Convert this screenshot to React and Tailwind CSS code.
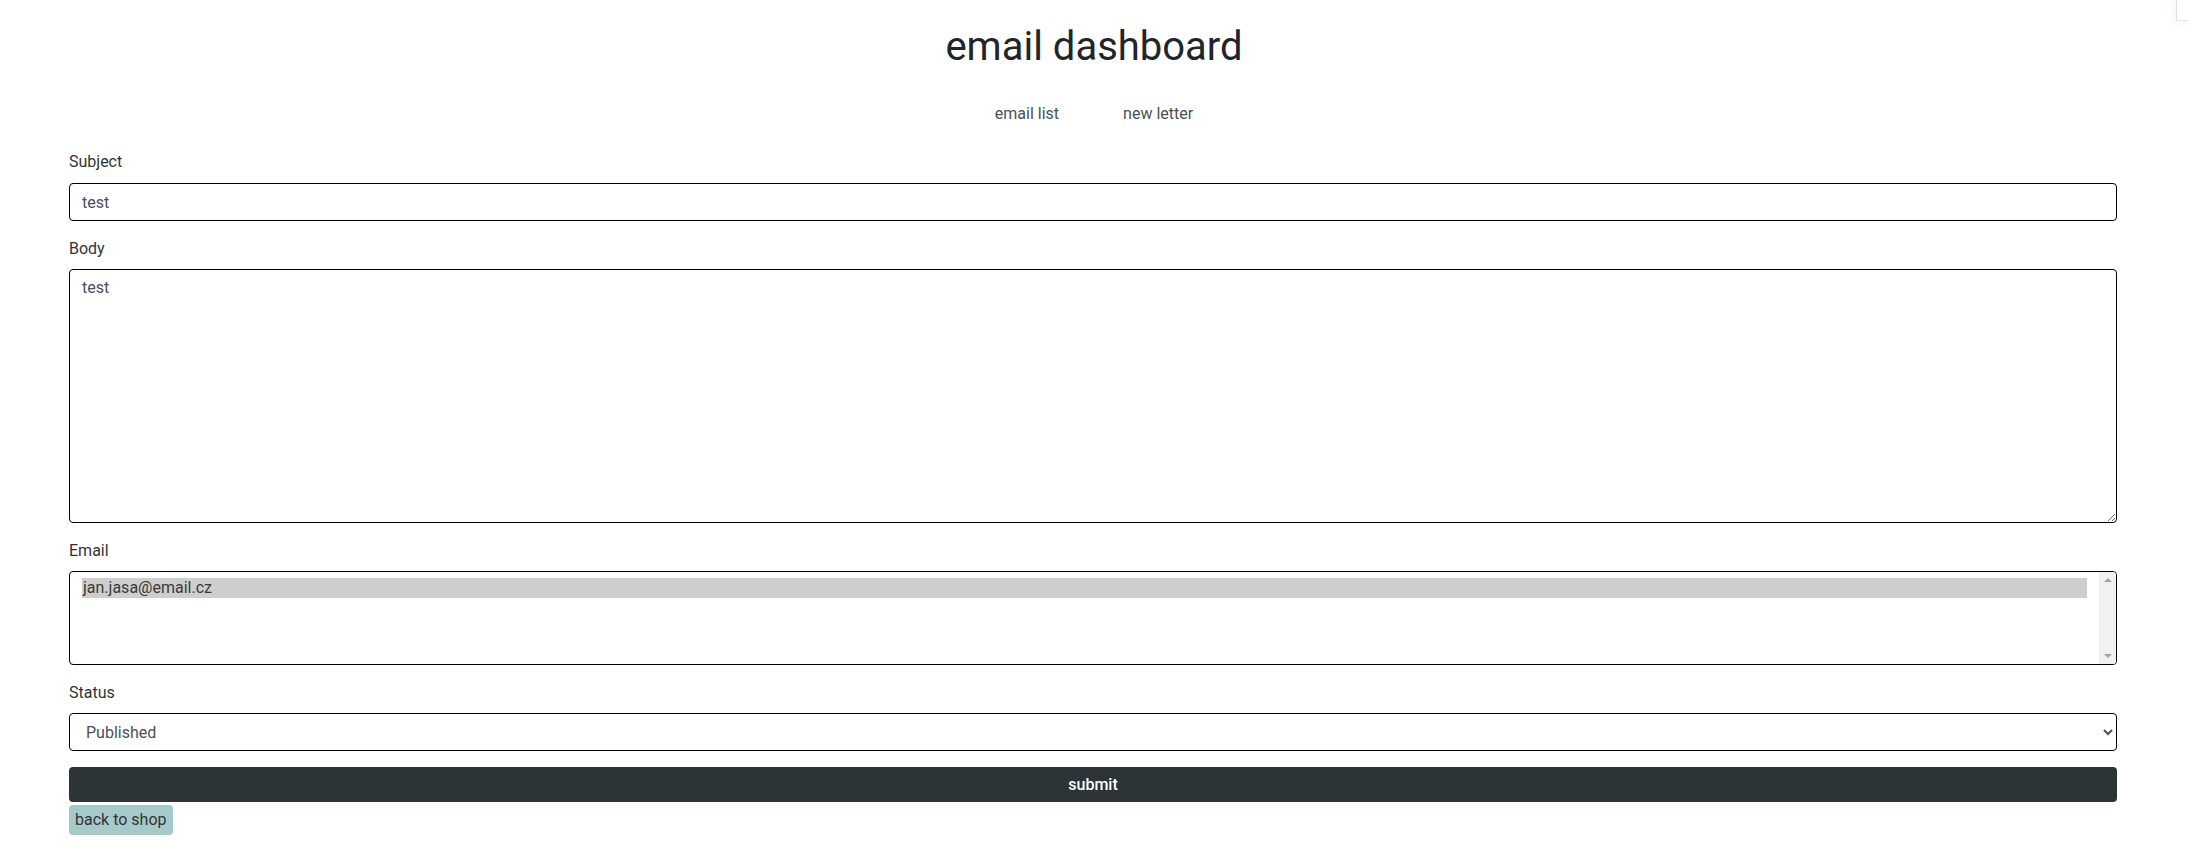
import React from 'react'

const labelCls = 'block mb-2 text-base leading-6 text-[#333]'
const fieldCls =
  'block w-full border border-black rounded-[4px] bg-white px-3 text-base leading-6 text-[#495057] outline-none'

function Field({ label, children }) {
  return (
    <div className="mb-4">
      <label className={labelCls}>{label}</label>
      {children}
    </div>
  )
}

// list box with the classic scrollbar on the right
function EmailList({ emails, selected }) {
  return (
    <div role="listbox" aria-multiselectable="true" className="flex h-[94px] w-full overflow-hidden rounded-[4px] border border-black bg-white">
      <div className="flex-1 px-3 py-1.5">
        {emails.map((email) => (
          <div
            key={email}
            role="option"
            aria-selected={email === selected}
            className={`h-5 pl-[1px] text-base leading-5 text-[#3a3a3a] ${email === selected ? 'bg-[#cecece]' : ''}`}
          >
            {email}
          </div>
        ))}
      </div>
      <div className="flex w-[17px] flex-col items-center justify-between bg-[#f1f1f1] py-[6px]">
        <span className="h-0 w-0 border-x-[4px] border-b-[4px] border-x-transparent border-b-[#a3a3a3]" />
        <span className="h-0 w-0 border-x-[4px] border-t-[4px] border-x-transparent border-t-[#a3a3a3]" />
      </div>
    </div>
  )
}

export default function App() {
  return (
    <div className="relative min-h-[858px] bg-white font-['Roboto',sans-serif] text-[#212529]">
      {/* corner widget peeking in */}
      <div className="absolute right-0 top-0 h-[21px] w-[12px] border-b border-l border-[#e3e3e3] bg-white shadow-[0_0_14px_rgba(0,0,0,0.08)]" />

      <h1 className="pt-[23px] mb-[23px] text-center text-[40px] leading-[48px] font-normal text-[#212529]">
        email dashboard
      </h1>

      <nav className="mb-4 flex justify-center">
        <a className="px-8 py-2 text-base leading-6 text-[#495057]" href="#">
          email list
        </a>
        <a className="px-8 py-2 text-base leading-6 text-[#495057]" href="#">
          new letter
        </a>
      </nav>

      <form className="ml-[69px] w-[2048px]" onSubmit={(e) => e.preventDefault()}>
        <div className="mb-4">
          <label className="block mb-[9px] text-base leading-6 text-[#333]">Subject</label>
          <input className={`${fieldCls} h-[38px] py-1.5`} defaultValue="test" />
        </div>

        <Field label="Body">
          <textarea className={`${fieldCls} h-[254px] py-1.5`} defaultValue="test" />
        </Field>

        <Field label="Email">
          <EmailList emails={['jan.jasa@email.cz']} selected="jan.jasa@email.cz" />
        </Field>

        <Field label="Status">
          <select className={`${fieldCls} h-[38px]`} defaultValue="published">
            <option value="published">Published</option>
            <option value="draft">Draft</option>
          </select>
        </Field>

        <button
          type="submit"
          className="block h-[35px] w-full rounded-[4px] bg-[#2d3436] text-base font-medium leading-6 text-white"
        >
          submit
        </button>
      </form>

      <div className="ml-[69px] mt-[3px]">
        <a
          href="#"
          className="inline-block rounded-[4px] bg-[#a6cacc] px-[6px] py-[3px] text-base leading-6 text-[#333]"
        >
          back to shop
        </a>
      </div>
    </div>
  )
}
